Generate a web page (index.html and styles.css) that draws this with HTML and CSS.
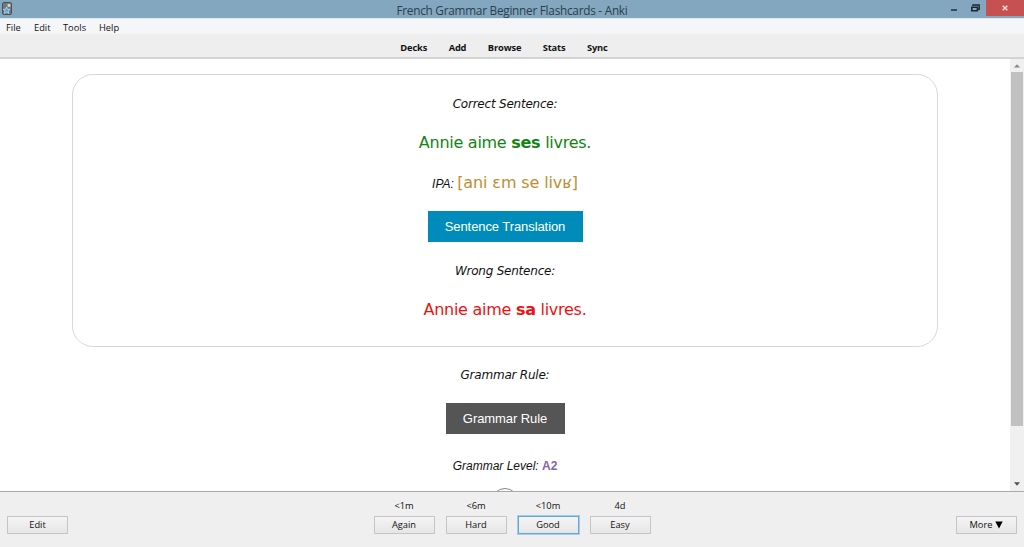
FILE: index.html
```html
<!DOCTYPE html>
<html lang="en">
<head>
<meta charset="utf-8">
<title>French Grammar Beginner Flashcards - Anki</title>
<link rel="stylesheet" href="styles.css">
</head>
<body>
<div class="window">
  <header class="titlebar">
    <svg class="app-icon" viewBox="0 0 10 13" width="10" height="13"><rect x=".5" y=".5" width="9" height="12" rx="1.5" fill="#77777a" stroke="#4b5257"/><path d="M7 1.2l.7 1.4 1.4.2-1 1 .3 1.5L7 4.6l-1.4.7.3-1.5-1-1 1.4-.2z" fill="#d5dfe5"/><path d="M4.6 5l1 2.2 2.4.2-1.8 1.6.6 2.5-2.2-1.3-2.2 1.3.6-2.5-1.8-1.6 2.4-.2z" fill="#45aeea" stroke="#e2edf3" stroke-width=".6"/></svg>
    <span class="title">French Grammar Beginner Flashcards - Anki</span>
    <div class="controls">
      <svg class="minimize" width="8" height="10" viewBox="0 0 8 10"><path d="M1 8h6" stroke="#273640" stroke-width="1.6"/></svg>
      <svg class="restore" width="9" height="8" viewBox="0 0 9 8"><path d="M2 2V1h6.2v4.4H7" fill="none" stroke="#1d2930" stroke-width="1.4"/><path d="M.8 3.2h5.6v3.6H.8z" fill="none" stroke="#1d2930" stroke-width="1.6"/></svg>
      <div class="close"><svg width="6" height="6" viewBox="0 0 6 6"><path d="M.7.7l4.6 4.6M5.3.7L.7 5.3" stroke="#f5e5e5" stroke-width="1.4"/></svg></div>
    </div>
  </header>
  <nav class="menu"><span class="m-file">File</span><span class="m-edit">Edit</span><span class="m-tools">Tools</span><span>Help</span></nav>
  <nav class="toolbar"><span>Decks</span><span>Add</span><span>Browse</span><span>Stats</span><span>Sync</span></nav>
  <main class="viewport">
    <div class="page">
      <section class="card">
        <p class="label correct-label">Correct Sentence:</p>
        <p class="sentence correct">Annie aime <b>ses</b> livres.</p>
        <p class="ipa"><i>IPA:</i> <span>[ani ɛm se livʁ]</span></p>
        <div class="hint translation">Sentence Translation</div>
        <p class="label wrong-label">Wrong Sentence:</p>
        <p class="sentence wrong">Annie aime <b>sa</b> livres.</p>
      </section>
      <p class="label rule-label">Grammar Rule:</p>
      <div class="hint rule">Grammar Rule</div>
      <p class="level"><i>Grammar Level:</i> <b>A2</b></p>
      <div class="replay"></div>
    </div>
    <div class="scrollbar">
      <svg class="up" width="6" height="4" viewBox="0 0 6 4"><path d="M0 3.5L3 .3l3 3.2z" fill="#888"/></svg>
      <div class="thumb"></div>
      <svg class="down" width="6" height="4" viewBox="0 0 6 4"><path d="M0 .3h6L3 3.7z" fill="#505050"/></svg>
    </div>
  </main>
  <footer class="answers">
    <div class="btn">Edit</div>
    <div class="choices">
      <div class="choice"><span>&lt;1m</span><div class="btn">Again</div></div>
      <div class="choice"><span>&lt;6m</span><div class="btn">Hard</div></div>
      <div class="choice"><span>&lt;10m</span><div class="btn focus">Good</div></div>
      <div class="choice"><span>4d</span><div class="btn">Easy</div></div>
    </div>
    <div class="btn">More <svg width="8" height="8" viewBox="0 0 8 8"><path d="M.3.5h7.4L4 7.5z" fill="#000"/></svg></div>
  </footer>
</div>
</body>
</html>
```
FILE: styles.css
```css
* { box-sizing: border-box; }
body { margin: 0; font-family: "Open Sans", "Noto Sans", sans-serif; color: #111; }
p { margin: 0; }
.window { width: 1024px; height: 547px; display: flex; flex-direction: column; overflow: hidden; background: #fff; }

.titlebar { height: 18px; flex: none; display: grid; grid-template-columns: 90px 1fr 90px; background: #82a7bf; }
.app-icon { margin: 2px 0 0 2px; }
.title { text-align: center; font-size: 11.8px; line-height: 20px; color: #2b3f4c; white-space: nowrap; letter-spacing: -.26px; }
.controls { display: flex; align-items: flex-start; }
.minimize { margin: 2px 0 0 16px; }
.restore { margin: 4px 0 0 13px; }
.close { width: 38px; height: 16px; margin-left: 6px; background: #c75050; display: flex; align-items: center; justify-content: center; }

.menu { height: 16px; flex: none; padding-left: 6px; background: #f5f6f7; border-top: 1px solid #dfe8ee; display: flex; font-size: 9.3px; line-height: 17px; }
.m-file { width: 28px; }
.m-edit { width: 29px; }
.m-tools { width: 36px; }
.toolbar { height: 25px; flex: none; padding-right: 16px; background: #eee; border-bottom: 2px solid #d3d3d3; display: flex; justify-content: center; gap: 21.5px; font-size: 9.3px; font-weight: 700; line-height: 27px; letter-spacing: -.15px; }

.viewport { height: 432px; flex: none; display: flex; overflow: hidden; }
.page { width: 1010px; padding-top: 15px; display: flex; flex-direction: column; align-items: center; }
.card { width: 866px; height: 273px; flex: none; padding-top: 19px; border: 1px solid #d8d8d8; border-radius: 21px; display: flex; flex-direction: column; align-items: center; }
.label, .sentence, .ipa, .level { height: 20px; flex: none; line-height: 20px; white-space: nowrap; }
.label { font-family: "DejaVu Sans", sans-serif; font-size: 12px; font-style: italic; letter-spacing: -.22px; }
.sentence { margin-top: 19px; font-family: "DejaVu Sans", sans-serif; font-size: 16px; letter-spacing: -.27px; }
.correct { color: #118411; }
.wrong { color: #ee1111; }
.ipa { margin-top: 20px; font-family: "Liberation Sans", sans-serif; font-size: 12px; }
.ipa span { font-family: "DejaVu Sans", sans-serif; font-size: 16px; color: #bf8e35; letter-spacing: -.12px; }
.hint { flex: none; height: 31px; display: flex; align-items: center; justify-content: center; font-family: "Liberation Sans", sans-serif; font-size: 13px; letter-spacing: -.08px; color: #fff; }
.translation { width: 155px; margin-top: 18px; background: #008cba; }
.wrong-label { margin-top: 19px; }
.rule-label { margin-top: 18px; }
.rule { width: 119px; margin-top: 18px; background: #555; }
.level { margin-top: 22px; font-family: "Liberation Sans", sans-serif; font-size: 12px; }
.level b { color: #8763ae; }
.replay { width: 28px; height: 28px; flex: none; margin-top: 12px; border: 1px solid #888; border-radius: 50%; }

.scrollbar { width: 14px; padding: 0 1px; background: #f0f0f0; display: flex; flex-direction: column; align-items: center; }
.up { margin: 5px 0 4px; flex: none; }
.thumb { width: 12px; height: 354px; flex: none; background: #c1c1c1; }
.down { margin-top: 56px; flex: none; }

.answers { height: 56px; flex: none; padding: 0 7px; background: #efefef; border-top: 1px solid #a9a9a9; display: flex; justify-content: space-between; align-items: flex-start; font-size: 9.3px; }
.btn { width: 61px; height: 18px; border: 1px solid #c5c5c5; background: linear-gradient(#f4f4f4, #e6e6e6); display: flex; align-items: center; justify-content: center; gap: 3px; line-height: 16px; }
.answers > .btn { margin-top: 24px; }
.choices { display: flex; gap: 11px; }
.choice { display: flex; flex-direction: column; align-items: center; }
.choice span { height: 24px; line-height: 28px; }
.focus { outline: 1px solid #a5cce5; border-color: #60a9d8; }
```
